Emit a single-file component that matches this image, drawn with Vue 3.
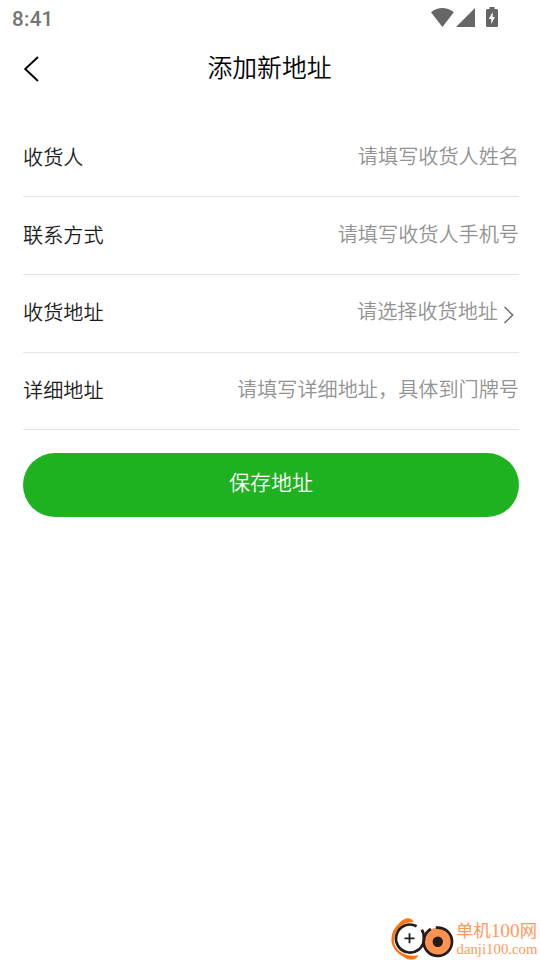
<script setup>
const fields = [
  { label: '收货人', hint: '请填写收货人姓名' },
  { label: '联系方式', hint: '请填写收货人手机号' },
  { label: '收货地址', hint: '请选择收货地址', picker: true },
  { label: '详细地址', hint: '请填写详细地址，具体到门牌号' },
]
</script>

<template>
  <main class="screen">
    <div class="status">
      <span class="time">8:41</span>
      <svg class="signals" width="68" height="22" viewBox="0 0 68 22">
        <path d="M0 5.2Q11.3-3 22.8 5.2L11.4 20Z" />
        <path d="M25 20L44 1V20Z" />
        <path fill-rule="evenodd" d="M58.5 0h5v2h2q1.5 0 1.5 1.5v15q0 1.500-1.500 1.500h-9q-1.500 0-1.500-1.500V3.500q0-1.500 1.500-1.500h2ZM61.700 5L57.800 12H60.200V17L64 10H61.700Z" />
      </svg>
    </div>
    <header class="bar">
      <svg class="back" width="18" height="28" viewBox="0 0 18 28">
        <path d="M16 2L3.200 14L16 26" />
      </svg>
      <h1>添加新地址</h1>
    </header>
    <section class="form">
      <div v-for="field in fields" :key="field.label" class="row">
        <span class="label">{{ field.label }}</span>
        <span class="hint">{{ field.hint }}</span>
        <svg v-if="field.picker" class="more" width="12" height="18" viewBox="0 0 12 18">
          <path d="M1.5 1L9.7 9L1.5 17" />
        </svg>
      </div>
      <button class="save">保存地址</button>
    </section>
    <footer class="brand">
      <svg width="152" height="46" viewBox="388 914 152 46">
        <path class="orange" d="M398.500 924Q402 919.500 407 918.300Q412 918 413.500 922Q404 922 399 928Q392.500 935 394.500 944Q396.500 950 402 953Q409 957 418.500 955.200Q416 960.300 410 959.500Q406 959 403 956.500Q393 951 391.500 942Q390.500 931 398.500 924Z" />
        <circle cx="437.8" cy="941.8" r="14" class="disc" />
        <path class="ring" d="M416.600 926.200A14 14 0 1 0 424 939.200Q424.200 933.200 421.800 929.800" />
        <path class="ring" d="M430.800 928.800Q424.500 933 423.800 939.500A14.200 14.200 0 1 0 435.800 927.700" />
        <circle cx="437.8" cy="941.8" r="5.2" class="hub" />
        <path class="plus" d="M404.500 938.300H414.500M409.500 933.300V943.300" />
        <text class="name" x="456" y="937.3" textLength="81" lengthAdjust="spacingAndGlyphs">单机<tspan class="digits">100</tspan>网</text>
        <text class="domain" x="456.5" y="954" textLength="81" lengthAdjust="spacingAndGlyphs">danji100.com</text>
      </svg>
    </footer>
  </main>
</template>

<style>
body {
  margin: 0;
  background: #fff;
}
</style>

<style scoped>
.screen {
  display: flex;
  flex-direction: column;
  box-sizing: border-box;
  width: 540px;
  height: 960px;
  overflow: hidden;
  background: #fff;
  font-family: "Noto Sans CJK SC", sans-serif;
  font-weight: 350;
}
.status {
  display: flex;
  justify-content: space-between;
  box-sizing: border-box;
  height: 38px;
  padding: 7px 41px 0 12px;
}
.time {
  font: 500 20.5px/24px Roboto, sans-serif;
  letter-spacing: 0.3px;
  color: #747474;
}
.signals {
  fill: #666;
}
.bar {
  display: grid;
  grid-template-columns: 40px 1fr 40px;
  align-items: center;
  height: 60px;
  padding: 0 22px;
}
.back {
  margin-top: 2px;
  fill: none;
  stroke: #000;
  stroke-width: 1.9;
}
h1 {
  margin: -4px 0 0 -1px;
  text-align: center;
  font-size: 24.8px;
  line-height: 36px;
  font-weight: 350;
  color: #000;
}
.form {
  display: flex;
  flex-direction: column;
  padding: 21.5px 21px 0 23px;
}
.row {
  display: flex;
  align-items: center;
  box-sizing: border-box;
  height: 77.7px;
  padding-bottom: 2px;
  border-bottom: 1px solid #e5e5e5;
  font-size: 20.15px;
  line-height: 30px;
}
.label {
  flex: 1;
  color: #1c1c1c;
}
.hint {
  margin-top: -2px;
  color: #929292;
}
.more {
  margin: 6px 4px 0 5px;
  fill: none;
  stroke: #666;
  stroke-width: 1.4;
}
.save {
  height: 64px;
  margin-top: 22.7px;
  padding: 0 0 8px;
  border: 0;
  border-radius: 32px;
  background: #1eb221;
  color: #fff;
  font: 350 21px/30px "Noto Sans CJK SC", sans-serif;
}
.brand {
  display: flex;
  justify-content: flex-end;
  margin-top: auto;
}
.orange {
  fill: #ff7412;
}
.disc {
  fill: #ff9250;
}
.ring {
  fill: none;
  stroke: #231b1c;
  stroke-width: 2.7;
}
.hub {
  fill: #231b1c;
}
.plus {
  fill: none;
  stroke: #231b1c;
  stroke-width: 1.8;
}
.name,
.domain {
  fill: #ff995d;
  font-family: "Liberation Serif", "Noto Sans CJK SC", serif;
  font-weight: 400;
}
.name {
  font-size: 17.5px;
}
.digits {
  font-size: 19.5px;
}
.domain {
  font-size: 15px;
}
</style>
